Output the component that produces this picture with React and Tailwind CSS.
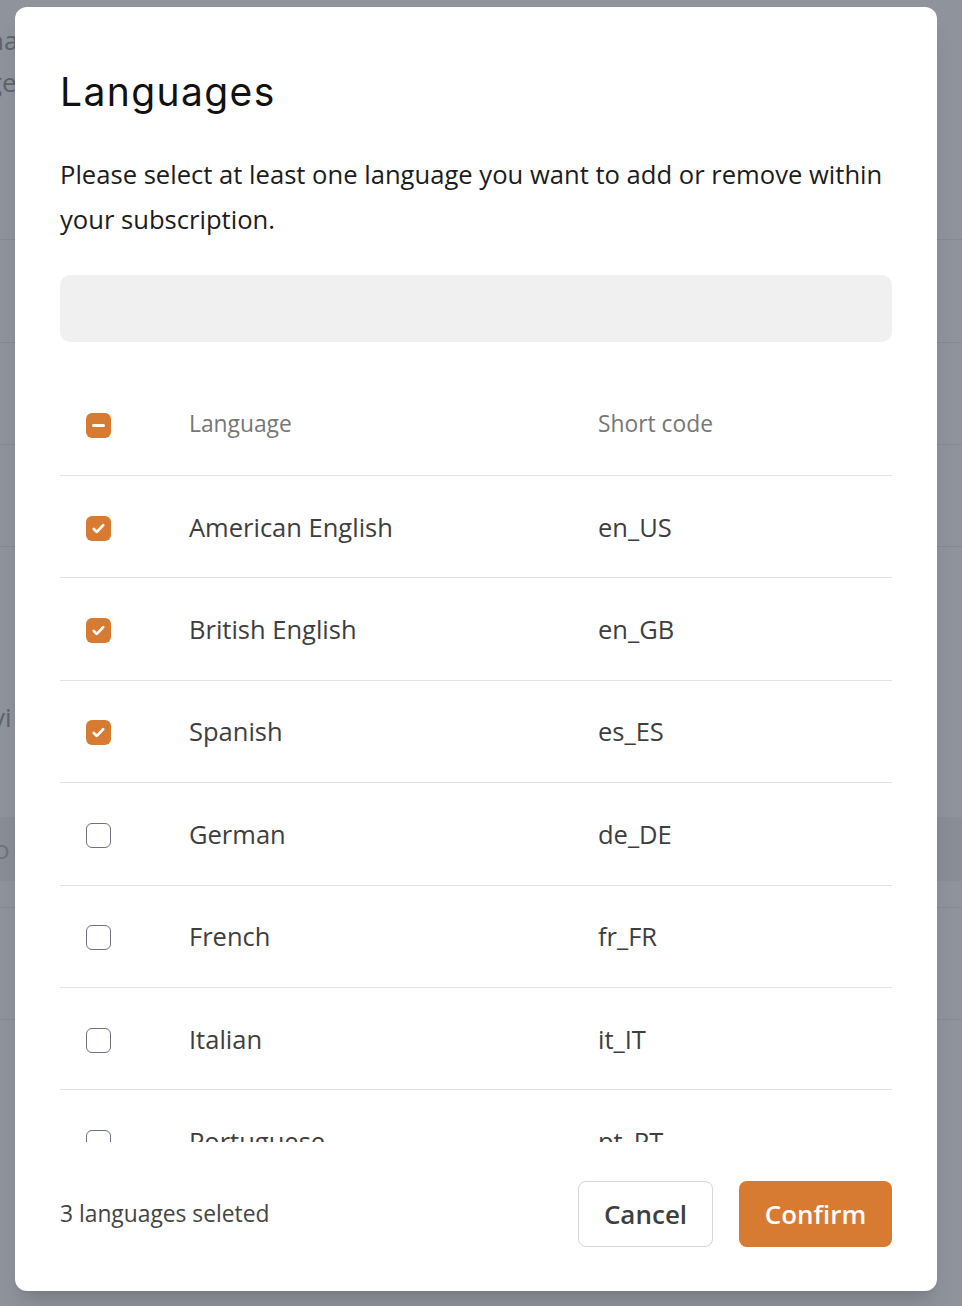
import { useState } from "react";

const languages = [
  { name: "American English", code: "en_US", checked: true },
  { name: "British English", code: "en_GB", checked: true },
  { name: "Spanish", code: "es_ES", checked: true },
  { name: "German", code: "de_DE", checked: false },
  { name: "French", code: "fr_FR", checked: false },
  { name: "Italian", code: "it_IT", checked: false },
  { name: "Portuguese", code: "pt_PT", checked: false },
  { name: "Dutch", code: "nl_NL", checked: false },
];

const Checkbox = ({ state }) => {
  if (state === "checked") {
    return (
      <span className="flex h-[25px] w-[25px] items-center justify-center rounded-[6px] bg-[#d77a32]">
        <svg width="15" height="15" viewBox="0 0 14 14" fill="none">
          <path
            d="M2.6 7.4 5.5 10.2 11.4 3.9"
            stroke="white"
            strokeWidth="2.5"
            strokeLinecap="round"
            strokeLinejoin="round"
          />
        </svg>
      </span>
    );
  }
  if (state === "partial") {
    return (
      <span className="flex h-[25px] w-[25px] items-center justify-center rounded-[6px] bg-[#d77a32]">
        <span className="h-[3px] w-[13px] rounded-full bg-white" />
      </span>
    );
  }
  return (
    <span className="block h-[25px] w-[25px] rounded-[6px] border-[1.5px] border-[#6e7280] bg-white" />
  );
};

const App = () => {
  const [rows] = useState(languages);
  const count = rows.filter((r) => r.checked).length;

  return (
    <div
      className="relative h-[1306px] w-[962px] overflow-hidden bg-[#8f939c]"
      style={{ fontFamily: '"Open Sans", "Noto Sans", sans-serif' }}
    >
      {/* <!-- page behind the overlay --> */}
      <div className="flex flex-col text-[26px] text-[#5f636c]">
        <div className="-ml-[12px] mt-[20px] h-[40px] leading-[40px]">na</div>
        <div className="-ml-[12px] h-[45px] leading-[45px]">ge</div>
        <div className="h-[135px] border-b border-[#858993]" />
        <div className="h-[103px] border-b border-[#858993]" />
        <div className="h-[102px] border-b border-[#858993]" />
        <div className="h-[102px] border-b border-[#858993]" />
        <div className="-ml-[8px] mt-[150px] h-[40px] leading-[40px]">vi</div>
        <div className="mt-[80px] h-[64px] bg-[#898d96] leading-[64px] text-[#6f737c]">
          <span className="-ml-[6px]">o</span>
        </div>
        <div className="h-[27px] border-b border-[#858993]" />
        <div className="h-[112px] border-b border-[#858993]" />
      </div>

      {/* <!-- Modal --> */}
      <div className="absolute left-[15px] top-[7px] flex h-[1284px] w-[922px] flex-col rounded-[12px] bg-white px-[45px] pb-[44px] pt-[61px] shadow-xl">
        <h1
          className="h-[48px] text-[39px] leading-[48px] tracking-[1.4px] text-[#111111]"
          style={{ fontFamily: 'Inter, "Noto Sans", sans-serif' }}
        >
          Languages
        </h1>
        <p className="mt-[36px] text-[25.6px] leading-[45px] text-[#1c1c1c]">
          Please select at least one language you want to add or remove within
          your subscription.
        </p>
        <div className="mt-[33px] h-[67px] w-full shrink-0 rounded-[10px] bg-[#f0f0f0]" />

        {/* <!-- Table --> */}
        <div className="mt-[31px] h-[769px] shrink-0 overflow-hidden">
          <div className="flex h-[103px] items-center border-b border-[#e3e3e3] text-[22.8px] text-[#777777]">
            <div className="w-[129px] pl-[26px] pt-[3px]">
              <Checkbox state="partial" />
            </div>
            <div className="w-[409px]">Language</div>
            <div className="flex-1">Short code</div>
          </div>
          {rows.map((row) => (
            <div
              key={row.code}
              className="flex h-[102.4px] items-center border-b border-[#e3e3e3] text-[25.5px] text-[#3e3e3e]"
            >
              <div className="w-[129px] pl-[26px] pt-[3px]">
                <Checkbox state={row.checked ? "checked" : "empty"} />
              </div>
              <div className="w-[409px]">{row.name}</div>
              <div className="flex-1">{row.code}</div>
            </div>
          ))}
        </div>

        {/* <!-- Footer --> */}
        <div className="mt-[39px] flex items-center justify-between">
          <span className="text-[22.8px] text-[#444444]">
            {count} languages seleted
          </span>
          <div className="flex gap-[26px]">
            <button className="h-[66px] w-[135px] rounded-[8px] border border-[#d6d6d6] bg-white text-[26px] font-semibold leading-none text-[#3f3f3f]">
              Cancel
            </button>
            <button className="h-[66px] w-[153px] rounded-[8px] bg-[#d77a32] text-[26px] font-semibold leading-none text-white">
              Confirm
            </button>
          </div>
        </div>
      </div>
    </div>
  );
};

export default App;
